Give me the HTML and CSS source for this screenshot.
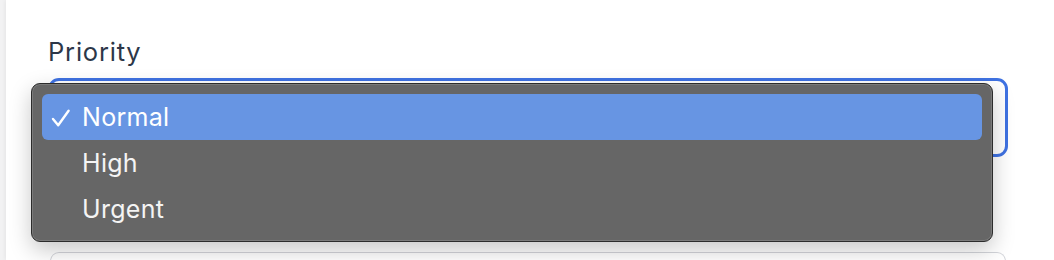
FILE: index.html
```html
<!DOCTYPE html>
<html lang="en">
<head>
<meta charset="utf-8">
<title>Priority</title>
<link rel="stylesheet" href="styles.css">
</head>
<body>
<div class="card">
  <label class="label">Priority</label>
  <div class="field">
    <div class="select"></div>
    <div class="menu" role="listbox">
      <div class="option selected"><svg class="check" viewBox="0 0 20 20" width="20" height="20"><polyline points="2,11 7.2,17.3 17.6,2.8" fill="none" stroke="#fff" stroke-width="2.4" stroke-linecap="round" stroke-linejoin="round"/></svg><span>Normal</span></div>
      <div class="option"><span>High</span></div>
      <div class="option"><span>Urgent</span></div>
    </div>
  </div>
  <div class="input"></div>
</div>
</body>
</html>
```
FILE: styles.css
```css
html, body {
  margin: 0;
  padding: 0;
  height: 100%;
  overflow: hidden;
}
body {
  background: #f2f2f3;
  font-family: "Inter", "Liberation Sans", sans-serif;
}
.card {
  margin-left: 6px;
  height: 100%;
  background: #ffffff;
  box-shadow: -1px 0 4px rgba(0,0,0,0.06);
  padding: 36px 40px 0 42px;
  box-sizing: border-box;
  overflow: hidden;
}
.label {
  display: block;
  font-size: 25.5px;
  line-height: 32px;
  letter-spacing: 0.8px;
  color: #2d3748;
  font-weight: 400;
  margin-left: 0;
}
.field {
  position: relative;
  margin-top: 10px;
  width: 960px;
}
.select {
  height: 79px;
  box-sizing: border-box;
  border: 3px solid #3f72e2;
  border-radius: 11px;
  background: #fff;
}
.menu {
  position: absolute;
  left: -17px;
  top: 5px;
  width: 962px;
  height: 159px;
  box-sizing: border-box;
  padding: 10px 10px 0 10px;
  background: #666666;
  border: 1px solid #2c2c2c;
  border-radius: 9px;
  box-shadow: inset 0 0 0 1px rgba(255,255,255,0.14), 0 8px 22px rgba(0,0,0,0.22);
}
.option {
  height: 46px;
  display: flex;
  align-items: center;
  padding-left: 40px;
  position: relative;
  color: #f4f4f4;
  font-size: 25px;
  letter-spacing: 0.3px;
  border-radius: 6px;
}
.option.selected {
  background: #6795e3;
  color: #ffffff;
}
.check {
  position: absolute;
  left: 9px;
  top: 14px;
}
.input {
  margin-top: 95px;
  margin-left: 2px;
  width: 956px;
  height: 9px;
  box-sizing: border-box;
  border: 1.5px solid #d3d5da;
  border-bottom: none;
  border-radius: 10px 10px 0 0;
}
```
